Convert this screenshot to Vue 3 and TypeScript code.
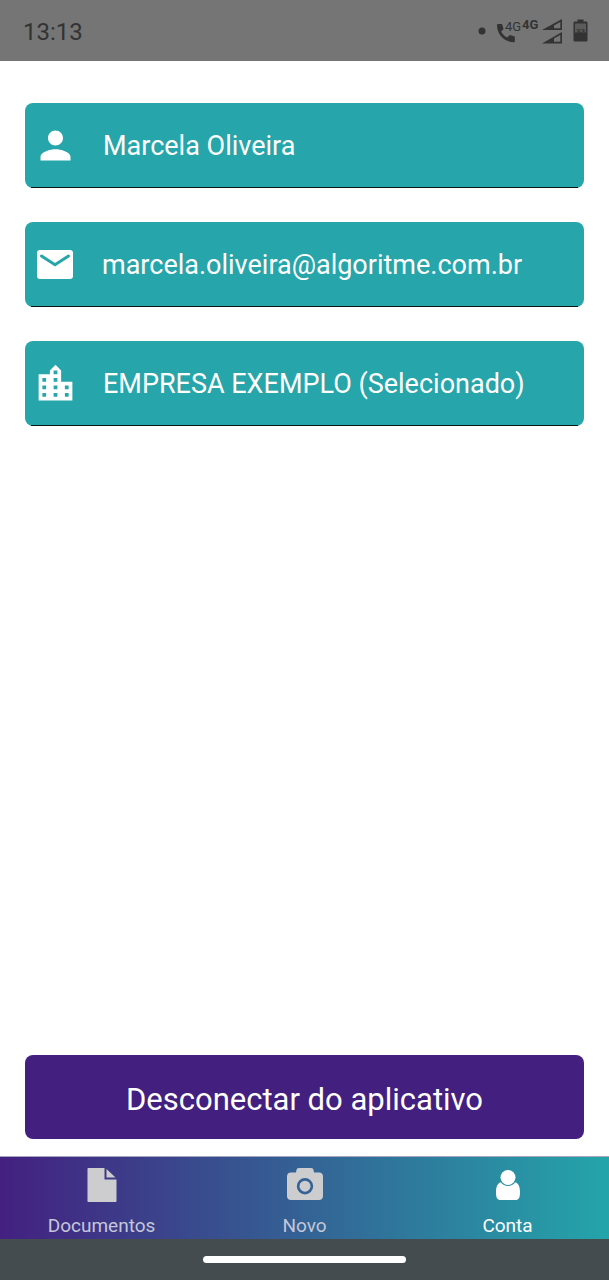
<script setup lang="ts">
import { ref } from 'vue'

type IconName = 'person' | 'mail' | 'city'
type TabName = 'documentos' | 'novo' | 'conta'

interface AccountRow {
  icon: IconName
  text: string
}

interface Tab {
  id: TabName
  label: string
}

const rows: AccountRow[] = [
  { icon: 'person', text: 'Marcela Oliveira' },
  { icon: 'mail', text: 'marcela.oliveira@algoritme.com.br' },
  { icon: 'city', text: 'EMPRESA EXEMPLO (Selecionado)' },
]

const tabs: Tab[] = [
  { id: 'documentos', label: 'Documentos' },
  { id: 'novo', label: 'Novo' },
  { id: 'conta', label: 'Conta' },
]

const activeTab = ref<TabName>('conta')
</script>

<template>
  <div class="screen">
    <header class="status-bar">
      <time class="clock">13:13</time>
      <svg class="status-icons" width="112" height="28" viewBox="0 0 112 28" aria-hidden="true">
        <circle cx="4" cy="13" r="3.5" />
        <path d="M20 6h4l1.600 5-2.400 2.500c1.400 2.800 3.300 4.700 6 6l2.600-2.500 5 1.500v4.700c0 .6-.4 1-1 1C26.300 24.200 19 16.400 19 7c0-.6.4-1 1-1z" />
        <text class="net-label" x="27" y="13">4G</text>
        <text class="net-label strong" x="44" y="11">4G</text>
        <path fill-rule="evenodd" d="M64 12 84 1v11zM76 10.300h6.300V4L76 7.400z" />
        <path fill-rule="evenodd" d="M64 25.500 84 14v11.500zM76 23.800h6.300V17L76 20.600z" />
        <path d="M99.500 1.500h6v2h2.500c1 0 1.500.5 1.500 1.500v17c0 1-.5 1.500-1.500 1.500h-11c-1 0-1.500-.5-1.500-1.500v-17c0-1 .5-1.500 1.500-1.500h2.500z" />
        <path class="battery-empty" d="M97 5.500h11v9h-11z" />
        <text class="battery-label" x="102.500" y="16">33</text>
      </svg>
    </header>

    <main class="content">
      <ul class="rows">
        <li v-for="row in rows" :key="row.icon" class="row" :class="row.icon">
          <svg v-if="row.icon === 'person'" class="row-icon" viewBox="0 0 24 24" aria-hidden="true">
            <path d="M12 12c2.210 0 4-1.790 4-4s-1.790-4-4-4-4 1.790-4 4 1.790 4 4 4zm0 2c-2.670 0-8 1.340-8 4v2h16v-2c0-2.660-5.330-4-8-4z" />
          </svg>
          <svg v-else-if="row.icon === 'mail'" class="row-icon" viewBox="0 0 44 44" aria-hidden="true">
            <rect x="4" y="7" width="36" height="29" rx="3" />
            <path class="flap" d="M8.500 13 22 21.800l13.500-8.800" />
          </svg>
          <svg v-else class="row-icon" viewBox="0 0 24 24" aria-hidden="true">
            <path d="M15 11V5l-3-3-3 3v2H3v14h18V11h-6zm-8 8H5v-2h2v2zm0-4H5v-2h2v2zm0-4H5V9h2v2zm6 8h-2v-2h2v2zm0-4h-2v-2h2v2zm0-4h-2V9h2v2zm0-4h-2V5h2v2zm6 12h-2v-2h2v2zm0-4h-2v-2h2v2z" />
          </svg>
          <span class="row-text">{{ row.text }}</span>
        </li>
      </ul>

      <button type="button" class="logout">Desconectar do aplicativo</button>
    </main>

    <nav class="tabs">
      <a
        v-for="tab in tabs"
        :key="tab.id"
        class="tab"
        :class="{ active: tab.id === activeTab }"
        :href="'#' + tab.id"
        :aria-current="tab.id === activeTab ? 'page' : undefined"
        @click.prevent="activeTab = tab.id"
      >
        <svg class="tab-icon" viewBox="0 0 40 40" aria-hidden="true">
          <path
            v-if="tab.id === 'documentos'"
            d="M6 3h16.500v11.500H34.500V36c0 .6-.4 1-1 1H6.500c-.6 0-1-.4-1-1V4c0-.6.2-1 .5-1zM24.500 4l9 8.500h-9z"
          />
          <template v-else-if="tab.id === 'novo'">
            <path
              fill-rule="evenodd"
              d="M14 3h12c1.600 0 2.300.8 2.500 2l.5 2.500h5c2.500 0 4 1.500 4 4V31c0 2.500-1.500 4-4 4H6c-2.500 0-4-1.500-4-4V11.500c0-2.500 1.500-4 4-4h5l.5-2.500c.2-1.200.9-2 2.500-2zM20 13a8.200 8.200 0 1 0 0 16.400A8.200 8.200 0 1 0 20 13z"
            />
            <circle cx="20" cy="21.200" r="5.500" />
          </template>
          <template v-else>
            <circle cx="20" cy="12.500" r="7.500" />
            <path d="M12.800 17.200c1.800 2.500 4.200 3.700 7.200 3.700s5.400-1.200 7.200-3.700c3.400.8 4.800 4.800 4.800 10.300 0 5.200-1.300 7.500-4.500 7.500h-15C9.300 35 8 32.700 8 27.500c0-5.500 1.400-9.500 4.800-10.300z" />
          </template>
        </svg>
        <span>{{ tab.label }}</span>
      </a>
    </nav>

    <footer class="system-bar"><span class="handle"></span></footer>
  </div>
</template>

<style>
body {
  margin: 0;
}
</style>

<style scoped>
.screen {
  display: flex;
  flex-direction: column;
  min-height: 100vh;
  background: #fff;
  font-family: Roboto, "Liberation Sans", sans-serif;
}

.status-bar {
  display: flex;
  align-items: center;
  justify-content: space-between;
  box-sizing: border-box;
  height: 61px;
  padding: 2px 19px 0 23px;
  background: #757575;
  color: #333;
}

.clock {
  font-size: 24px;
  line-height: 28px;
}

.status-icons {
  fill: #333;
}

.net-label {
  font-size: 13px;
}

.net-label.strong {
  font-weight: 700;
}

.battery-empty {
  fill: #5c5c5c;
}

.battery-label {
  font-size: 8px;
  font-weight: 700;
  text-anchor: middle;
}

.content {
  display: flex;
  flex: 1;
  flex-direction: column;
  justify-content: space-between;
  gap: 34px;
  padding: 42px 25px 17px;
}

.rows {
  display: flex;
  flex-direction: column;
  gap: 34px;
  margin: 0;
  padding: 0;
  list-style: none;
}

.row {
  position: relative;
  display: flex;
  align-items: center;
  gap: 25px;
  box-sizing: border-box;
  min-height: 85px;
  padding: 0 8px;
  border-radius: 8px;
  background: #26a5aa;
  color: #fff;
}

.row::after {
  content: "";
  position: absolute;
  right: 6px;
  bottom: 0;
  left: 6px;
  height: 1px;
  background: #0c1414;
}

.row-icon {
  flex: none;
  width: 45px;
  height: 45px;
  fill: #fff;
}

.row.mail .row-icon {
  width: 44px;
  height: 44px;
}

.flap {
  fill: none;
  stroke: #26a5aa;
  stroke-width: 3;
  stroke-linecap: round;
}

.row-text {
  padding-top: 1px;
  font-size: 27px;
  line-height: 36px;
}

.logout {
  min-height: 84px;
  padding: 5px 16px 0;
  border: 0;
  border-radius: 8px;
  background: #432080;
  color: #fff;
  font-family: inherit;
  font-size: 31px;
  line-height: 36px;
}

.tabs {
  display: grid;
  grid-template-columns: repeat(3, 1fr);
  box-sizing: border-box;
  height: 83px;
  border-top: 1px solid #a7a6c0;
  background: linear-gradient(90deg, #432080, #24a5aa);
}

.tab {
  display: flex;
  flex-direction: column;
  align-items: center;
  gap: 11px;
  padding-top: 8px;
  color: #c3c7d8;
  font-size: 19px;
  line-height: 20px;
  text-decoration: none;
}

.tab.active {
  color: #fff;
}

.tab-icon {
  width: 40px;
  height: 40px;
  fill: #cdcdcf;
}

.tab.active .tab-icon {
  fill: #fff;
}

.system-bar {
  display: flex;
  align-items: center;
  justify-content: center;
  height: 41px;
  background: #444c50;
}

.handle {
  width: 33.333%;
  height: 7px;
  border-radius: 4px;
  background: #fff;
}
</style>
